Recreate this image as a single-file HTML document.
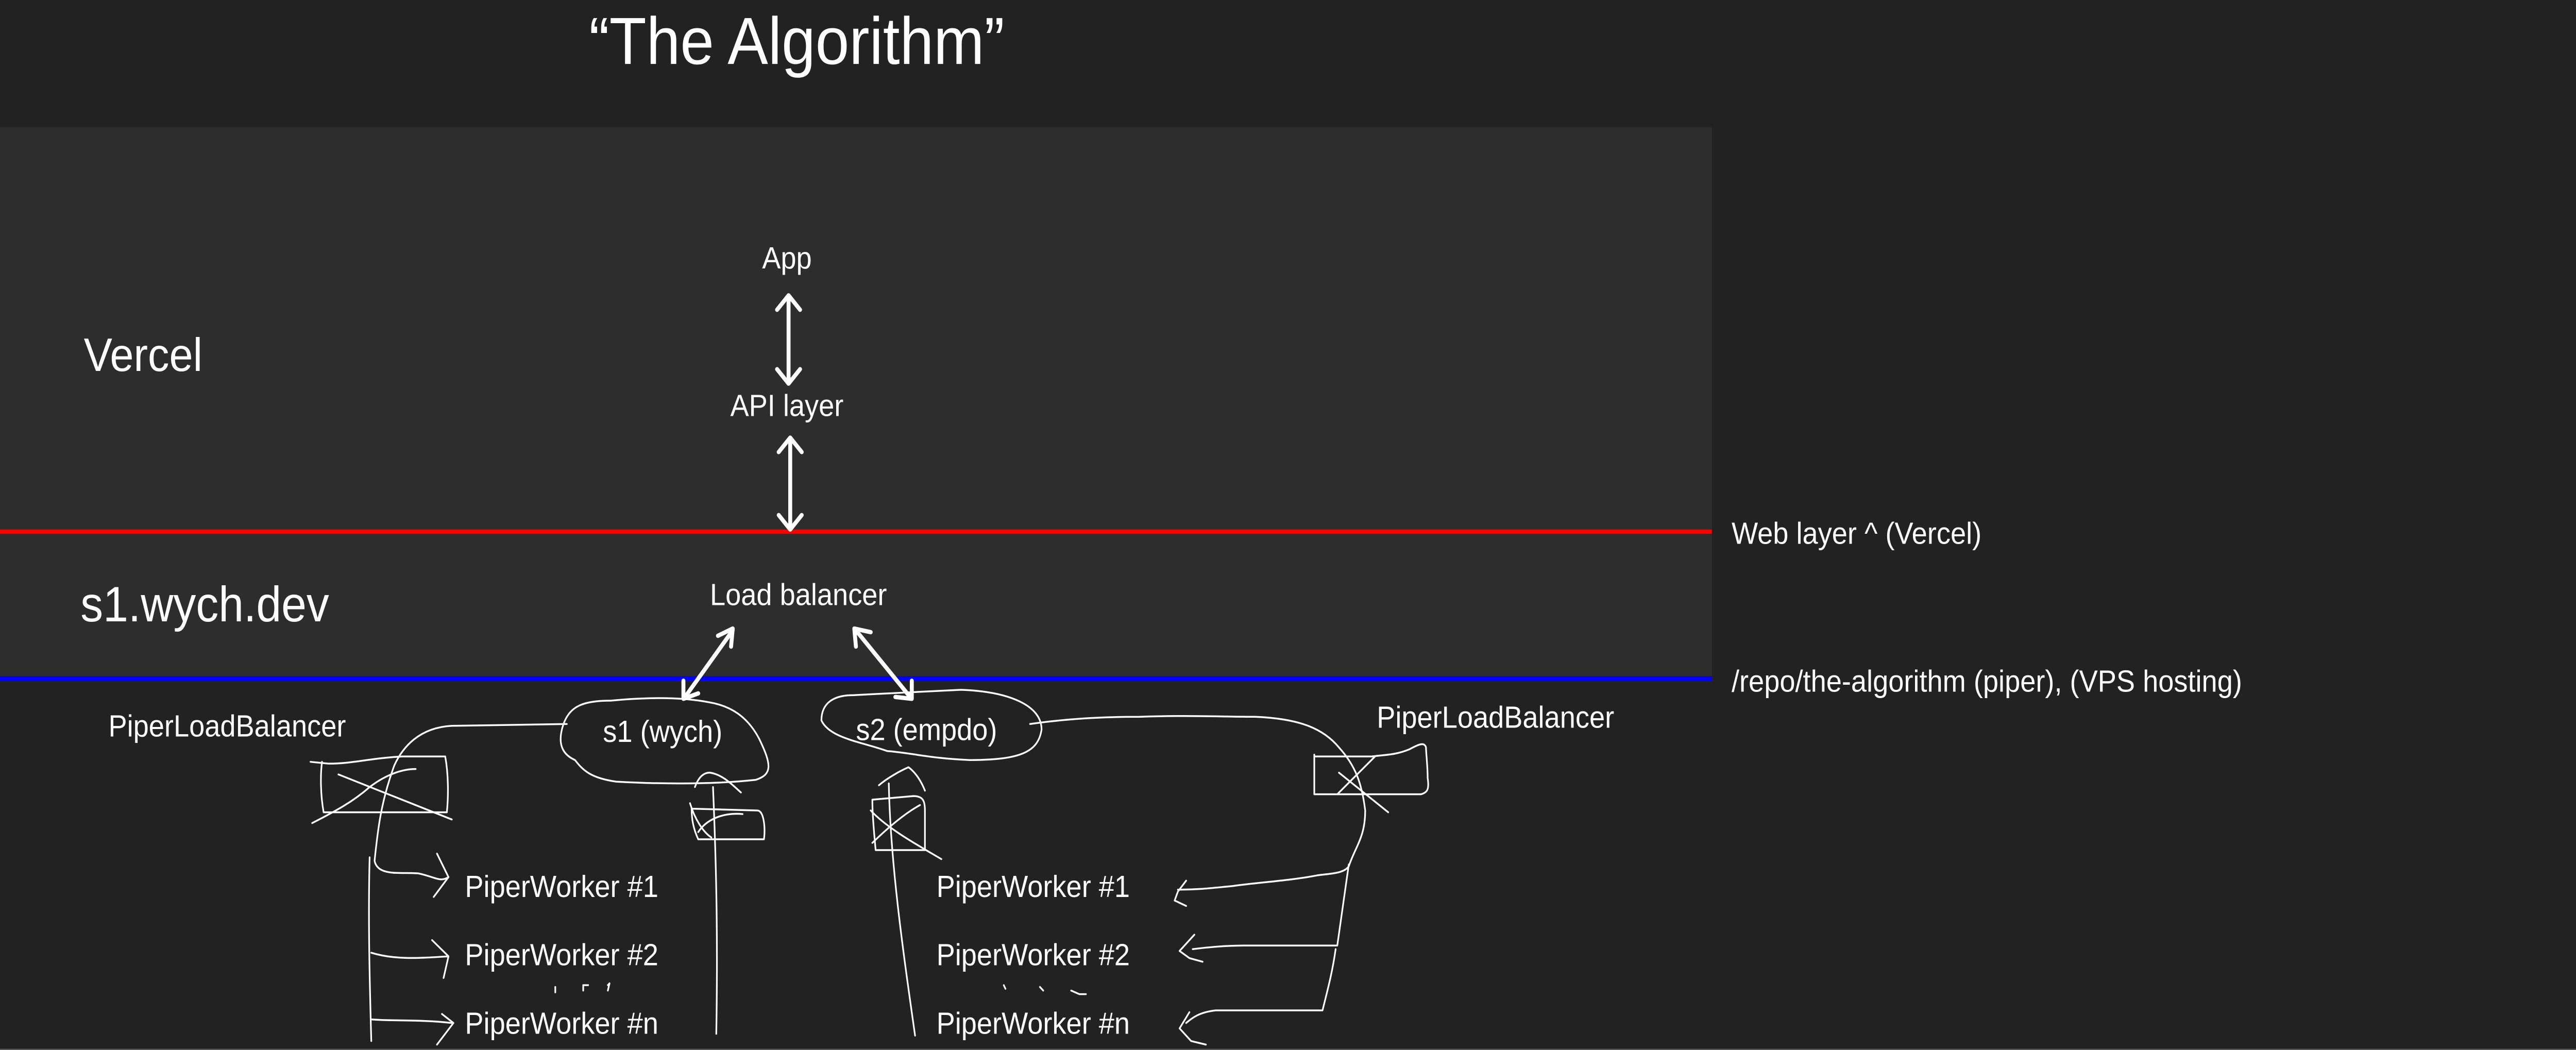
<!DOCTYPE html>
<html><head><meta charset="utf-8"><style>
html,body{margin:0;padding:0;background:#222222;width:100%;height:100%;overflow:hidden}
svg{display:block;position:fixed;left:0;top:0;width:100vw;height:100vh}
text{font-family:"Liberation Sans",sans-serif;fill:#ffffff}
</style></head><body>
<svg viewBox="0 0 1568 583" preserveAspectRatio="none" xmlns="http://www.w3.org/2000/svg">
<rect x="0" y="0" width="1568" height="583" fill="#222222"/>
<rect x="0" y="70.6" width="1042" height="306" fill="#2d2d2d"/>
<rect x="0" y="294" width="1042" height="2.4" fill="#ff0000"/>
<rect x="0" y="375.5" width="1042" height="2.4" fill="#0000ff"/>
<rect x="0" y="582.3" width="1568" height="0.7" fill="#555"/>

<text x="485" y="35.5" font-size="37" text-anchor="middle">“The Algorithm”</text>
<text x="51" y="206" font-size="26">Vercel</text>
<text x="49" y="345" font-size="27.5">s1.wych.dev</text>
<text x="479" y="149" font-size="17" text-anchor="middle">App</text>
<text x="479" y="231" font-size="17" text-anchor="middle">API layer</text>
<text x="486" y="336" font-size="17" text-anchor="middle">Load balancer</text>
<text x="1054" y="302" font-size="17">Web layer ^ (Vercel)</text>
<text x="1054" y="384" font-size="17">/repo/the-algorithm (piper), (VPS hosting)</text>
<text x="66" y="409" font-size="17">PiperLoadBalancer</text>
<text x="838" y="404" font-size="17">PiperLoadBalancer</text>
<text x="367" y="412" font-size="17">s1 (wych)</text>
<text x="521" y="411" font-size="17">s2 (empdo)</text>
<text x="283" y="498" font-size="17">PiperWorker #1</text>
<text x="283" y="536" font-size="17">PiperWorker #2</text>
<text x="283" y="574" font-size="17">PiperWorker #n</text>
<text x="570" y="498" font-size="17">PiperWorker #1</text>
<text x="570" y="536" font-size="17">PiperWorker #2</text>
<text x="570" y="574" font-size="17">PiperWorker #n</text>

<g stroke="#fff" stroke-width="2.4" fill="none" stroke-linecap="round" stroke-linejoin="round">
<path d="M480 165 L480 212 M473 172 L480 164 L487 172 M473 205 L480 213 L487 205"/>
<path d="M481 244 L481 292 M474 251 L481 243 L488 251 M474 286 L481 294 L488 286"/>
<path d="M446 350 L417 387 M437 353 L446 349 L445 359 M416 378 L416 388 L425 385"/>
<path d="M521 350 L554 387 M521 359 L520 349 L530 351 M545 387 L555 388 L555 378"/>
</g>

<g stroke="#fff" stroke-width="1" fill="none" stroke-linecap="round" stroke-linejoin="round">
<path d="M372 389 C395 387 415 387 432 390 C445 392 455 398 462 410 C470 425 470 430 460 433 C430 436 395 435 375 434 C360 432 355 428 350 422 C340 418 340 410 343 402 C347 392 355 389 372 389 Z"/>
<path d="M519 386 C540 385 560 384 585 383 C615 384 634 392 634 405 C632 418 620 422 590 422 C565 421 555 418 540 417 C525 412 505 410 500 400 C500 390 508 386 519 386 Z"/>
<path d="M345 402 L275 403 C255 404 245 415 240 425 C232 445 230 460 228 478 C230 487 245 484 255 485 C265 487 268 490 273 487"/>
<path d="M266 474 L273 487 L264 498"/>
<path d="M225 476 C224 510 225 545 226 578"/>
<path d="M226 529 C240 533 255 532 273 531 M263 522 L273 531 L270 543"/>
<path d="M226 566 C240 567 255 566 275 568 M269 563 L276 568 L266 580"/>
<path d="M189 423 L200 424 C215 424 225 421 245 420 L271 420 C273 430 273 442 272 451 L255 451 C235 451 215 451 197 451 C195 441 195 430 196 423"/>
<path d="M206 430 L275 455 M190 457 C205 450 215 445 225 437 C235 430 245 427 253 427"/>
<path d="M434 437 C436 480 437 520 436 574"/>
<path d="M423 437 C425 432 428 429 432 429 C440 430 446 436 451 440"/>
<path d="M421 449 L461 450 C465 450 466 460 465 466 L425 466 C422 460 421 455 421 449 Z"/>
<path d="M420 446 C423 455 428 462 433 465 M425 462 C430 455 440 451 452 452"/>
<path d="M338 548 L338 551 M355 550 L355 547 L358 547 M370 547 L371 546 L370 550"/>
<path d="M627 402 C650 399 670 398 694 398 C720 397 745 398 764 398 C790 399 805 404 815 415 C825 425 829 435 831 450 C831 465 825 470 821 481 C818 485 810 485 802 486 C785 489 765 490 750 492 C738 493 730 494 717 494"/>
<path d="M722 489 L717 495 L715 500 L722 503"/>
<path d="M821 480 C818 500 816 512 814 525 L760 525 C745 525 735 526 726 527"/>
<path d="M727 519 L718 528 L724 532 L732 534"/>
<path d="M813 527 C811 540 808 550 805 561 L740 561 C730 562 726 565 722 568"/>
<path d="M724 562 L718 571 L725 578 L734 580"/>
<path d="M800 419 L800 441 L835 441 L865 441 C869 440 870 438 869 432 C869 425 868 418 868 415 C867 412 864 413 858 416 C850 419 845 419 835 420 L800 420"/>
<path d="M815 429 L845 451 M814 441 L837 420"/>
<path d="M541 435 C542 480 550 530 557 575"/>
<path d="M535 436 C540 432 548 428 553 426 C556 428 560 432 563 439"/>
<path d="M531 444 L556 442 C562 442 563 445 563 450 L563 472 L533 472 C532 462 531 452 531 444 Z"/>
<path d="M530 450 C540 460 560 470 573 477 M531 468 C540 460 550 452 560 447"/>
<path d="M611 547 L612 549 M633 548 L635 550 M652 550 L657 552 L661 552"/>
</g>
</svg>
</body></html>
